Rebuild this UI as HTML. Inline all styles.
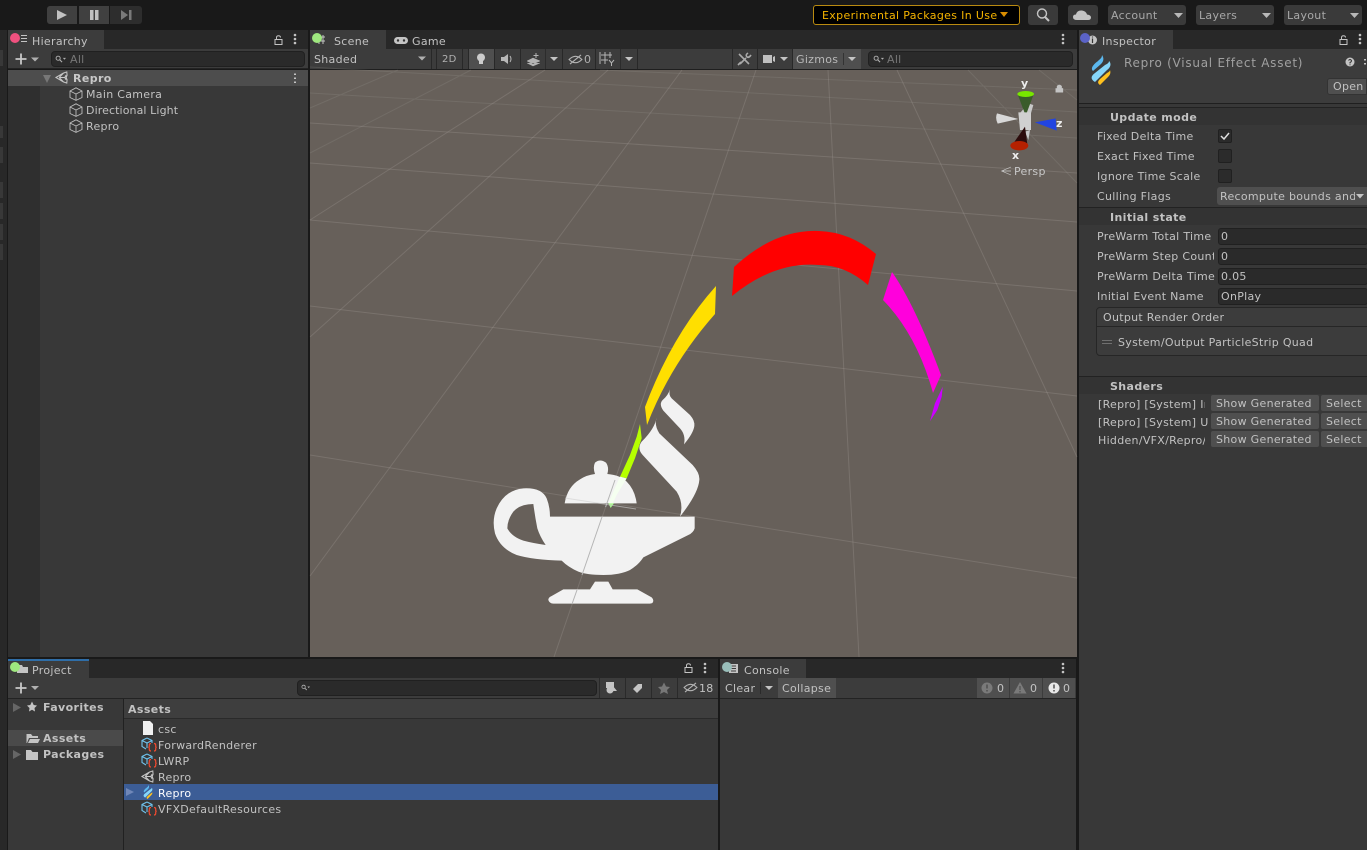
<!DOCTYPE html>
<html><head><meta charset="utf-8"><title>Unity</title>
<style>
html,body{margin:0;padding:0;background:#191919;width:1367px;height:850px;overflow:hidden}
div{position:absolute;box-sizing:border-box}
.t{font:11px/16px "DejaVu Sans","Liberation Sans",sans-serif;letter-spacing:.3px;color:#c2c2c2;white-space:nowrap;overflow:hidden;margin-top:1px}
.b{font-weight:bold;letter-spacing:.38px}
.w{background:#3c3c3c}
.f{background:#2a2a2a;border:1px solid #202020;border-radius:3px}
.k{background:#4f4f4f}
.u{background:#3a3a3a;border-radius:3px}
.c{background:#2b2b2b;border:1px solid #202020;border-radius:2px;width:14px;height:14px;left:1218px}
svg{position:absolute;left:0;top:0}
</style></head><body>

<!-- top toolbar -->
<div style="left:47px;top:6px;width:30px;height:18px;background:#404040;border-radius:3px 0 0 3px"></div>
<div style="left:79px;top:6px;width:30px;height:18px;background:#404040"></div>
<div style="left:110px;top:6px;width:32px;height:18px;background:#2d2d2d;border-radius:0 3px 3px 0"></div>
<div style="left:813px;top:5px;width:207px;height:20px;background:#000;border:1px solid #b98a10;border-radius:3px"></div>
<div class="u" style="left:1028px;top:5px;width:30px;height:20px"></div>
<div class="u" style="left:1068px;top:5px;width:30px;height:20px"></div>
<div class="u" style="left:1108px;top:5px;width:78px;height:20px"></div>
<div class="u" style="left:1196px;top:5px;width:78px;height:20px"></div>
<div class="u" style="left:1284px;top:5px;width:78px;height:20px"></div>

<!-- left slim panel -->
<div style="left:0;top:30px;width:7px;height:820px;background:#282828"></div>
<div style="left:0;top:50px;width:3px;height:16px;background:#383838"></div>
<div style="left:0;top:126px;width:3px;height:12px;background:#383838"></div>
<div style="left:0;top:147px;width:3px;height:16px;background:#383838"></div>
<div style="left:0;top:182px;width:3px;height:16px;background:#383838"></div>
<div style="left:0;top:203px;width:3px;height:16px;background:#383838"></div>
<div style="left:0;top:224px;width:3px;height:16px;background:#383838"></div>
<div style="left:0;top:244px;width:3px;height:16px;background:#383838"></div>

<!-- hierarchy -->
<div style="left:8px;top:30px;width:300px;height:19px;background:#282828"></div>
<div style="left:8px;top:30px;width:96px;height:19px;background:#3c3c3c"></div>
<div class="w" style="left:8px;top:49px;width:300px;height:20px;border-bottom:1px solid #232323"></div>
<div class="f" style="left:51px;top:51px;width:254px;height:16px;border-radius:4px"></div>
<div style="left:8px;top:70px;width:300px;height:587px;background:#383838"></div>
<div style="left:8px;top:86px;width:32px;height:571px;background:#2f2f2f"></div>
<div style="left:8px;top:70px;width:300px;height:16px;background:#4d4d4d"></div>

<!-- scene -->
<div style="left:310px;top:30px;width:767px;height:19px;background:#282828"></div>
<div style="left:310px;top:30px;width:76px;height:19px;background:#3c3c3c"></div>
<div class="w" style="left:310px;top:49px;width:767px;height:20px"></div>
<div style="left:310px;top:69px;width:767px;height:1px;background:#1f1f1f"></div>
<div style="left:310px;top:70px;width:767px;height:587px;background:#67605a"></div>
<div style="left:431px;top:49px;width:1px;height:20px;background:#282828"></div>
<div style="left:436px;top:49px;width:1px;height:20px;background:#282828"></div>
<div style="left:462px;top:49px;width:1px;height:20px;background:#282828"></div>
<div class="k" style="left:469px;top:49px;width:25px;height:20px"></div>
<div style="left:468px;top:49px;width:1px;height:20px;background:#282828"></div>
<div style="left:494px;top:49px;width:1px;height:20px;background:#282828"></div>
<div style="left:520px;top:49px;width:1px;height:20px;background:#282828"></div>
<div style="left:545px;top:49px;width:1px;height:20px;background:#2c2c2c"></div>
<div style="left:562px;top:49px;width:1px;height:20px;background:#282828"></div>
<div style="left:595px;top:49px;width:1px;height:20px;background:#282828"></div>
<div style="left:620px;top:49px;width:1px;height:20px;background:#2c2c2c"></div>
<div style="left:637px;top:49px;width:1px;height:20px;background:#282828"></div>
<div style="left:732px;top:49px;width:1px;height:20px;background:#282828"></div>
<div style="left:757px;top:49px;width:1px;height:20px;background:#282828"></div>
<div class="k" style="left:793px;top:49px;width:68px;height:20px"></div>
<div style="left:792px;top:49px;width:1px;height:20px;background:#282828"></div>
<div style="left:843px;top:53px;width:1px;height:12px;background:#333"></div>
<div class="f" style="left:868px;top:51px;width:205px;height:16px;border-radius:4px"></div>

<!-- inspector -->
<div style="left:1079px;top:30px;width:288px;height:820px;background:#383838"></div>
<div style="left:1079px;top:30px;width:288px;height:19px;background:#282828"></div>
<div style="left:1079px;top:30px;width:94px;height:19px;background:#3c3c3c"></div>
<div class="w" style="left:1079px;top:49px;width:288px;height:54px"></div>
<div style="left:1079px;top:103px;width:288px;height:1px;background:#1f1f1f"></div>
<div style="left:1079px;top:107px;width:288px;height:1px;background:#222"></div>
<div style="left:1079px;top:108px;width:288px;height:17px;background:#333"></div>
<div style="left:1327px;top:78px;width:40px;height:17px;background:#4f4f4f;border-radius:3px 0 0 3px;border:1px solid #333"></div>
<div class="c" style="top:129px"></div>
<div class="c" style="top:149px"></div>
<div class="c" style="top:169px"></div>
<div style="left:1217px;top:187px;width:150px;height:18px;background:#4f4f4f;border-radius:3px 0 0 3px"></div>
<div style="left:1079px;top:207px;width:288px;height:1px;background:#222"></div>
<div style="left:1079px;top:208px;width:288px;height:17px;background:#333"></div>
<div class="f" style="left:1218px;top:228px;width:150px;height:17px"></div>
<div class="f" style="left:1218px;top:248px;width:150px;height:17px"></div>
<div class="f" style="left:1218px;top:268px;width:150px;height:17px"></div>
<div class="f" style="left:1218px;top:288px;width:150px;height:17px"></div>
<div style="left:1096px;top:307px;width:275px;height:49px;background:#3c3c3c;border:1px solid #262626;border-radius:4px"></div>
<div style="left:1096px;top:326px;width:271px;height:1px;background:#262626"></div>
<div style="left:1079px;top:376px;width:288px;height:1px;background:#222"></div>
<div style="left:1079px;top:377px;width:288px;height:17px;background:#333"></div>
<div class="k" style="left:1211px;top:395px;width:108px;height:16px;border-radius:2px"></div>
<div class="k" style="left:1211px;top:413px;width:108px;height:16px;border-radius:2px"></div>
<div class="k" style="left:1211px;top:431px;width:108px;height:16px;border-radius:2px"></div>
<div class="k" style="left:1321px;top:395px;width:46px;height:16px;border-radius:2px 0 0 2px"></div>
<div class="k" style="left:1321px;top:413px;width:46px;height:16px;border-radius:2px 0 0 2px"></div>
<div class="k" style="left:1321px;top:431px;width:46px;height:16px;border-radius:2px 0 0 2px"></div>

<!-- project -->
<div style="left:8px;top:659px;width:710px;height:191px;background:#383838"></div>
<div style="left:8px;top:659px;width:710px;height:19px;background:#282828"></div>
<div style="left:8px;top:659px;width:81px;height:19px;background:#3c3c3c;border-top:2px solid #2f6ea8"></div>
<div class="w" style="left:8px;top:678px;width:710px;height:20px"></div>
<div style="left:8px;top:698px;width:710px;height:1px;background:#232323"></div>
<div class="f" style="left:297px;top:680px;width:300px;height:16px;border-radius:4px"></div>
<div style="left:599px;top:678px;width:1px;height:20px;background:#2a2a2a"></div>
<div style="left:625px;top:678px;width:1px;height:20px;background:#2a2a2a"></div>
<div style="left:651px;top:678px;width:1px;height:20px;background:#2a2a2a"></div>
<div style="left:677px;top:678px;width:1px;height:20px;background:#2a2a2a"></div>
<div style="left:8px;top:730px;width:115px;height:16px;background:#4a4a4a"></div>
<div style="left:123px;top:699px;width:1px;height:151px;background:#212121"></div>
<div style="left:124px;top:699px;width:594px;height:20px;background:#3e3e3e;border-bottom:1px solid #2a2a2a"></div>
<div style="left:124px;top:784px;width:594px;height:16px;background:#3c5d96"></div>

<!-- console -->
<div style="left:720px;top:659px;width:356px;height:191px;background:#383838"></div>
<div style="left:720px;top:659px;width:356px;height:19px;background:#282828"></div>
<div style="left:720px;top:659px;width:86px;height:19px;background:#3c3c3c"></div>
<div class="w" style="left:720px;top:678px;width:356px;height:20px"></div>
<div style="left:720px;top:698px;width:356px;height:1px;background:#232323"></div>
<div class="k" style="left:778px;top:678px;width:58px;height:20px"></div>
<div style="left:760px;top:682px;width:1px;height:12px;background:#2a2a2a"></div>
<div class="k" style="left:977px;top:678px;width:32px;height:20px"></div>
<div class="k" style="left:1010px;top:678px;width:32px;height:20px"></div>
<div class="k" style="left:1043px;top:678px;width:32px;height:20px"></div>

<svg width="1367" height="850" viewBox="0 0 1367 850" xmlns="http://www.w3.org/2000/svg">
<defs>
<symbol id="box" viewBox="0 0 14 14"><path d="M7 .8 13 4v6.500L7 13.400 1 10.500V4ZM1 4l6 3 6-3M7 7v6.400" fill="none" stroke="#bcbcbc" stroke-width=".9"/></symbol>
<symbol id="uni" viewBox="0 0 14 14"><path d="M1 7 9 2.300 12.700 1 13 4.600 12 7 13 9.400 12.700 13 9 11.700ZM4.500 7H10.500L12 4.500M10.500 7 12 9.500M4.500 7 9 2.500M4.500 7 9 11.500" fill="none" stroke="#c8c8c8" stroke-width="1.100"/></symbol>
<symbol id="code" viewBox="0 0 17 16"><path d="M6 1 11 3.500V6M6 1 1 3.500V9.500L5 12M1 3.500 6 6 11 3.500M6 6V11" fill="none" stroke="#6fc3ee" stroke-width="1.100"/><path d="M10 6.500Q8.300 6.500 8.300 8V9.200Q8.300 10.300 7.300 10.300Q8.300 10.300 8.300 11.400V12.500Q8.300 14 10 14M13 6.500Q14.700 6.500 14.700 8V9.200Q14.700 10.300 15.700 10.300Q14.700 10.300 14.700 11.400V12.500Q14.700 14 13 14" fill="none" stroke="#f04a30" stroke-width="1.200"/></symbol>
<symbol id="vfx" viewBox="0 0 22 30"><path d="M13 0C15 3 15 6 12 9L4 16C1 13 5 9 9 6 11 4 13 3 13 0Z" fill="#5cb8ee"/><path d="M20 6C23 9 21 13 18 15L6 27C1 24 2 21 6 18L16 10C18 9 20 8 20 6Z" fill="#86d6fa"/><path d="M21 15C22 18 21 20 19 22L11 30C8 28 9 26 11 24L18 18C20 17 21 16 21 15Z" fill="#ffc11e"/></symbol>
<symbol id="lock" viewBox="0 0 9 10"><path d="M1 4.500H8V9.500H1ZM2.500 4.500V2.500Q2.500 .7 4.500 .7 6.500 .7 6.500 2.500" fill="none" stroke="#c4c4c4" stroke-width="1"/></symbol>
<symbol id="dots" viewBox="0 0 4 12"><circle cx="2" cy="2" r="1.300" fill="#c4c4c4"/><circle cx="2" cy="6" r="1.300" fill="#c4c4c4"/><circle cx="2" cy="10" r="1.300" fill="#c4c4c4"/></symbol>
<symbol id="srch" viewBox="0 0 14 10"><circle cx="4" cy="4" r="2.600" fill="none" stroke="#b0b0b0" stroke-width="1.200"/><path d="M6 6 9 9" stroke="#b0b0b0" stroke-width="1.400"/><path d="M10 3.500H14L12 6Z" fill="#b0b0b0"/></symbol>
<symbol id="eye" viewBox="0 0 16 12"><path d="M1 6Q8 -1 15 6Q8 13 1 6ZM2 11 14 1" fill="none" stroke="#b4b4b4" stroke-width="1.200"/></symbol>
</defs>

<!-- scene grid -->
<g stroke="#a9a49f" stroke-width="1" fill="none">
<path stroke-opacity=".18" d="M310 67 1077 112M600 70 1077 90M310 93 1077 138M310 108 398 70M310 153 471 70M968 70 1077 183M1039 70 1077 100"/>
<path stroke-opacity=".27" d="M310 123 1077 173M310 163 1077 222M310 220 1077 291M310 306 1077 396M310 455 1077 578"/>
<path stroke-opacity=".27" d="M310 220 545 70M310 337 608 70M310 576 682 70M554 657 756 70M828 70 859 657M897 70 1077 457"/>
</g>

<!-- strip -->
<path fill="#ff0000" d="M734 267Q775 229 819 231Q850 232 876 254L868 285Q845 265 819 265Q775 261 732 296Z"/>
<path fill="#ffdf00" d="M716 286 715 314Q670 365 647 425L645 407Q672 335 716 286Z"/>
<path fill="#ff00dc" d="M892 272Q915 305 941 375L933 393Q917 335 883 300Z"/>
<path fill="#cc00ff" d="M942.700 386.700 941.700 396.700 937.300 410 930 421.300 935 403.300Z"/>
<path fill="#b6ff00" d="M640 424 641.700 438.300 635 458.300 626.700 478.300 620 476.700 630 455 636.700 436.700Z"/>

<!-- lamp -->
<g transform="translate(480 380) scale(.33333)" fill="#f2f2f2">
<path d="M254 370Q262 320 300 298Q320 285 345 282Q338 262 345 248Q360 235 378 248Q388 262 382 282Q420 285 440 305Q465 330 470 370Z"/>
<path fill-rule="evenodd" d="M210 410H644V445Q640 458 625 465L490 532Q475 555 450 570Q420 585 370 585Q320 585 295 575Q265 562 245 542Q160 540 110 525Q60 505 45 460Q35 420 50 385Q75 330 130 325Q185 322 200 355Q210 380 210 410ZM160 372Q120 372 100 395Q82 420 82 445Q95 470 130 482Q160 490 197 495Q180 470 172 445Q165 410 160 372Z"/>
<path d="M250 628H330L345 605H385L398 628H472L515 652Q523 660 518 668Q516 671 505 671H220Q208 670 205 660Q205 652 215 648Z"/>
<path d="M530 112Q522 135 538 160L638 255Q660 280 658 300Q655 340 600 410Q612 370 590 335L488 225Q470 205 485 185Q525 145 530 112Z"/>
<path d="M570 28Q565 45 575 55L630 105Q645 122 643 138Q640 160 612 193Q618 165 600 145L550 92Q536 72 548 60Q565 45 570 28Z"/>
<path fill="#f5fff0" d="M420 290 440 295 410 345 395 378 385 370 400 335Z"/>
<path fill="#a5f58a" d="M385 370H402L392 384Z"/>
</g>
<path d="M602 517 582 575M577 590 572 604M615 480 605.600 507" stroke="#b5b5b5" stroke-width="1" fill="none"/>
<path d="M565 498 636 509" stroke="#cfcfcf" stroke-width="1" fill="none" opacity=".6"/>

<!-- gizmo -->
<g transform="translate(985 75) scale(.33333)">
<path d="M100 120 130 85 145 90 135 125Z" fill="#c8c8c8"/>
<path d="M98 58H146L122 122Z" fill="#3a5c2a"/><ellipse cx="122" cy="57" rx="25" ry="9" fill="#78e600"/>
<path d="M36 115Q30 130 38 146L100 132Z" fill="#d8d8d8"/>
<path d="M120 170 135 165 130 195Z" fill="#c8c8c8"/>
<path d="M100 112H138V165H105Z" fill="#d0d0d0"/>
<path d="M150 142 212 130 215 167Z" fill="#2244e0"/>
<path d="M120 155 128 215 85 205Z" fill="#2c0c0c"/><ellipse cx="103" cy="212" rx="27" ry="14" fill="#b52100"/>
<path d="M212 40H234V52H212ZM216 40V33Q223 26 230 33V40" fill="#c4c4c4" stroke="#c4c4c4" stroke-width="1"/>
<path d="M78 276 50 288 78 300M50 288H78" fill="none" stroke="#cfcfcf" stroke-width="2"/>
</g>

<!-- transport -->
<path d="M57 10 67 15 57 20Z" fill="#c2c2c2"/><path d="M90 10H93.500V20H90ZM95 10H98.500V20H95Z" fill="#c2c2c2"/><path d="M121 10 128 15 121 20ZM129 10H131.500V20H129Z" fill="#7a7a7a"/>
<path d="M1000 12H1008L1004 17Z" fill="#d98c00"/>
<circle cx="1042" cy="13.500" r="4.500" fill="none" stroke="#c4c4c4" stroke-width="1.400"/><path d="M1045 17 1049 21" stroke="#c4c4c4" stroke-width="2"/>
<path d="M1077 20Q1073 20 1073 17Q1073 14.500 1076 14.500Q1077 10 1082 10.500Q1086 11 1087 14.500Q1091 15 1091 17.500Q1091 20 1088 20Z" fill="#c4c4c4"/>
<path d="M1174 13H1183L1178.500 18ZM1262 13H1271L1266.500 18ZM1350 13H1359L1354.500 18Z" fill="#b8b8b8"/>

<!-- tab icons -->
<path d="M21 35.500H27M21 38.500H27M21 41.500H27" stroke="#c4c4c4" stroke-width="1"/>
<path d="M319 35V44M323 35V44M316 37H325M316 41H325" stroke="#c4c4c4" stroke-width="1"/>
<rect x="394" y="37" width="14" height="7" rx="3.500" fill="#c4c4c4"/><circle cx="398" cy="40.500" r="1.200" fill="#333"/><circle cx="404" cy="40.500" r="1.200" fill="#333"/>
<circle cx="1092.500" cy="40" r="4.500" fill="#c4c4c4"/><path d="M1092.500 38.500V43M1092.500 36.500V37.500" stroke="#333" stroke-width="1.200"/>
<path d="M17 665H22L23 667H28V673H17Z" fill="#c4c4c4"/>
<path d="M729 664H738V673H729Z" fill="#c4c4c4"/><path d="M731 666H736M731 668.500H736M731 671H736" stroke="#3c3c3c" stroke-width="1"/>

<!-- lock and dots -->
<use href="#lock" x="274" y="35" width="9" height="10"/><use href="#dots" x="293" y="33" width="4" height="12"/>
<use href="#dots" x="1061" y="33" width="4" height="12"/>
<use href="#lock" x="1339" y="35" width="9" height="10"/><use href="#dots" x="1358" y="33" width="4" height="12"/>
<use href="#lock" x="684" y="663" width="9" height="10"/><use href="#dots" x="703" y="662" width="4" height="12"/>
<use href="#dots" x="1061" y="662" width="4" height="12"/>

<!-- plus -->
<path d="M21 53.500V64.500M15.500 59H26.500M21 682.500V693.500M15.500 688H26.500" stroke="#c8c8c8" stroke-width="1.800"/>
<path d="M31 57.500H39L35 61.500ZM31 686H39L35 690Z" fill="#b0b0b0"/>

<!-- search icons -->
<use href="#srch" x="55" y="55" width="11" height="8"/>
<use href="#srch" x="873" y="55" width="11" height="8"/>
<use href="#srch" x="301" y="684" width="9" height="7"/>

<!-- hierarchy icons -->
<path d="M43 75H51L47 83Z" fill="#777"/>
<use href="#uni" x="55" y="71" width="13" height="13"/>
<path d="M295 73.500V75M295 77.500V79M295 81.500V83" stroke="#c4c4c4" stroke-width="2"/>
<use href="#box" x="69" y="87" width="14" height="14"/><use href="#box" x="69" y="103" width="14" height="14"/><use href="#box" x="69" y="119" width="14" height="14"/>

<!-- scene toolbar icons -->
<path d="M418 56.500H426L422 60.500Z" fill="#b0b0b0"/>
<circle cx="481" cy="57.500" r="4" fill="#cccccc"/><rect x="479" y="61" width="4" height="3" fill="#cccccc"/>
<path d="M501 57H504L508 54V64L504 61H501Z" fill="#b8b8b8"/><path d="M510 56Q512 59 510 62" stroke="#b8b8b8" fill="none"/>
<path d="M527 61 533 58 540 61 533 64ZM527 63 533 66 540 63" fill="#b4b4b4" stroke="#b4b4b4" stroke-width=".5"/><path d="M536 53V58M533.500 55.500H538.500" stroke="#b4b4b4"/>
<path d="M550 57H558L554 61ZM625 57H633L629 61ZM848 57H856L852 61ZM780 57H788L784 61Z" fill="#c4c4c4"/>
<use href="#eye" x="568" y="54" width="15" height="11"/>
<path d="M600 52V64M605 52V64M610 52V58M601 55H612M601 60H608M609 60 611.500 63 614 60M611.500 63V66" fill="none" stroke="#b4b4b4" stroke-width="1"/>
<path d="M739 54 749 64M748 53Q745 55 747 57Q749 58 751 55M740 64 746 58M738 65 741 62" stroke="#aaaaaa" stroke-width="1.600" fill="none"/>
<path d="M763 55H772V63H763ZM773 57 775 56V62L773 61Z" fill="#c0c0c0"/>

<!-- inspector icons -->
<use href="#vfx" x="1089" y="55" width="22" height="30"/>
<circle cx="1350" cy="62" r="4.500" fill="#c4c4c4"/><path d="M1348.500 60.500Q1350 58.500 1351.500 60.500Q1351.500 62 1350 62.500V63.500M1350 64.300V65.300" stroke="#333" fill="none"/>
<path d="M1365 59v1.500M1365 63v1.500" stroke="#c4c4c4" stroke-width="2"/>
<path d="M1221 136 1224 139 1229 133" fill="none" stroke="#e0e0e0" stroke-width="1.500"/>
<path d="M1356 194H1364L1360 198.500Z" fill="#c4c4c4"/>
<path d="M1102 340.500H1112M1102 343.500H1112" stroke="#707070"/>

<!-- project icons -->
<path d="M13 703 21 707.500 13 712ZM13 750 21 754.500 13 759Z" fill="#666"/>
<path d="M32 701.500 33.700 705 37 705.500 34.500 708 35 711.500 32 709.800 29 711.500 29.500 708 27 705.500 30.300 705Z" fill="#c4c4c4"/>
<path d="M26.500 743V734H31L32.500 736H38V738H29L27 743ZM28 743 30 739H40L38 743Z" fill="#c4c4c4"/>
<path d="M26 750H31L32.500 752H38V760H26Z" fill="#c4c4c4"/>
<path d="M143 721H150L153 724V735H143Z" fill="#f0f0f0"/>
<use href="#code" x="141" y="737" width="17" height="16"/>
<use href="#code" x="141" y="753" width="17" height="16"/>
<use href="#uni" x="141" y="770" width="13" height="13"/>
<path d="M126 788 134 792 126 796Z" fill="#7087b8"/>
<use href="#vfx" x="142" y="785" width="11" height="14"/>
<use href="#code" x="141" y="801" width="17" height="16"/>
<path d="M606 682H614V688H606Z" fill="#c4c4c4"/><circle cx="610" cy="690" r="3.500" fill="#c4c4c4"/><path d="M613 686 617 691H611Z" fill="#c4c4c4"/>
<path d="M633 689 638 684H642V688L637 693Z" fill="#c4c4c4"/>
<path d="M664 682.500 666 686.500 670 687 667 690 668 694 664 692 660 694 661 690 658 687 662 686.500Z" fill="#777"/>
<use href="#eye" x="683" y="682" width="15" height="11"/>

<!-- console icons -->
<path d="M765 686H773L769 690Z" fill="#c4c4c4"/>
<circle cx="987" cy="688" r="5.500" fill="#7a7a7a"/><path d="M987 684.500V688.500M987 690V691.500" stroke="#4f4f4f" stroke-width="1.500"/>
<path d="M1020 682 1026.500 693.500H1013.500Z" fill="#7a7a7a"/><path d="M1020 686V690M1020 691V692.500" stroke="#4f4f4f" stroke-width="1.200"/>
<circle cx="1054" cy="688" r="5.500" fill="#e8e8e8"/><path d="M1054 684.500V688.500M1054 690V691.500" stroke="#4f4f4f" stroke-width="1.500"/>
</svg>

<!-- text -->
<div class="t" style="left:822px;top:7px;color:#f5b400;letter-spacing:.34px">Experimental Packages In Use</div>
<div class="t" style="left:1111px;top:7px;color:#a8a8a8">Account</div>
<div class="t" style="left:1199px;top:7px;color:#a8a8a8">Layers</div>
<div class="t" style="left:1287px;top:7px;color:#a8a8a8">Layout</div>

<div class="t" style="left:32px;top:33px">Hierarchy</div>
<div class="t" style="left:70px;top:51px;color:#777">All</div>
<div class="t b" style="left:73px;top:70px;color:#c8c8c8">Repro</div>
<div class="t" style="left:86px;top:86px">Main Camera</div>
<div class="t" style="left:86px;top:102px;letter-spacing:.1px">Directional Light</div>
<div class="t" style="left:86px;top:118px">Repro</div>

<div class="t" style="left:334px;top:33px">Scene</div>
<div class="t" style="left:412px;top:33px">Game</div>
<div class="t" style="left:314px;top:51px">Shaded</div>
<div class="t" style="left:442px;top:51px;color:#b0b0b0;font-size:10px">2D</div>
<div class="t" style="left:584px;top:51px;color:#b0b0b0">0</div>
<div class="t" style="left:796px;top:51px;color:#b8b8b8">Gizmos</div>
<div class="t" style="left:887px;top:51px;color:#777">All</div>
<div class="t b" style="left:1021px;top:75px;color:#eee">y</div>
<div class="t b" style="left:1056px;top:115px;color:#eee">z</div>
<div class="t b" style="left:1012px;top:147px;color:#eee">x</div>
<div class="t" style="left:1014px;top:163px;color:#c8c8c8">Persp</div>

<div class="t" style="left:1102px;top:33px">Inspector</div>
<div class="t" style="left:1124px;top:54px;font-size:12px;letter-spacing:.75px;color:#a0a0a0">Repro (Visual Effect Asset)</div>
<div class="t" style="left:1333px;top:78px">Open</div>
<div class="t b" style="left:1110px;top:109px">Update mode</div>
<div class="t" style="left:1097px;top:128px">Fixed Delta Time</div>
<div class="t" style="left:1097px;top:148px">Exact Fixed Time</div>
<div class="t" style="left:1097px;top:168px">Ignore Time Scale</div>
<div class="t" style="left:1097px;top:188px">Culling Flags</div>
<div class="t" style="left:1220px;top:188px;width:135px">Recompute bounds and</div>
<div class="t b" style="left:1110px;top:209px">Initial state</div>
<div class="t" style="left:1097px;top:228px;width:120px">PreWarm Total Time</div>
<div class="t" style="left:1097px;top:248px;width:117px">PreWarm Step Count</div>
<div class="t" style="left:1097px;top:268px;width:120px">PreWarm Delta Time</div>
<div class="t" style="left:1097px;top:288px;width:120px">Initial Event Name</div>
<div class="t" style="left:1221px;top:228px">0</div>
<div class="t" style="left:1221px;top:248px">0</div>
<div class="t" style="left:1221px;top:268px">0.05</div>
<div class="t" style="left:1221px;top:288px">OnPlay</div>
<div class="t" style="left:1103px;top:309px">Output Render Order</div>
<div class="t" style="left:1118px;top:334px">System/Output ParticleStrip Quad</div>
<div class="t b" style="left:1110px;top:378px">Shaders</div>
<div class="t" style="left:1098px;top:396px;width:107px">[Repro] [System] Initialize</div>
<div class="t" style="left:1098px;top:414px;width:110px">[Repro] [System] Update</div>
<div class="t" style="left:1098px;top:432px;width:107px">Hidden/VFX/Repro/System</div>
<div class="t" style="left:1216px;top:395px">Show Generated</div>
<div class="t" style="left:1216px;top:413px">Show Generated</div>
<div class="t" style="left:1216px;top:431px">Show Generated</div>
<div class="t" style="left:1326px;top:395px">Select</div>
<div class="t" style="left:1326px;top:413px">Select</div>
<div class="t" style="left:1326px;top:431px">Select</div>

<div class="t" style="left:32px;top:662px">Project</div>
<div class="t b" style="left:43px;top:699px">Favorites</div>
<div class="t b" style="left:43px;top:730px">Assets</div>
<div class="t b" style="left:43px;top:746px">Packages</div>
<div class="t b" style="left:128px;top:701px">Assets</div>
<div class="t" style="left:158px;top:721px">csc</div>
<div class="t" style="left:158px;top:737px">ForwardRenderer</div>
<div class="t" style="left:158px;top:753px">LWRP</div>
<div class="t" style="left:158px;top:769px">Repro</div>
<div class="t" style="left:158px;top:785px;color:#fff">Repro</div>
<div class="t" style="left:158px;top:801px">VFXDefaultResources</div>
<div class="t" style="left:699px;top:680px">18</div>

<div class="t" style="left:744px;top:662px">Console</div>
<div class="t" style="left:725px;top:680px">Clear</div>
<div class="t" style="left:782px;top:680px">Collapse</div>
<div class="t" style="left:997px;top:680px">0</div>
<div class="t" style="left:1030px;top:680px">0</div>
<div class="t" style="left:1063px;top:680px">0</div>

<!-- color dots -->
<div style="left:10px;top:33px;width:10px;height:10px;border-radius:50%;background:#f0517f"></div>
<div style="left:312px;top:33px;width:10px;height:10px;border-radius:50%;background:#9fe87f"></div>
<div style="left:1080px;top:33px;width:10px;height:10px;border-radius:50%;background:#5b63c7"></div>
<div style="left:10px;top:662px;width:10px;height:10px;border-radius:50%;background:#9fe87f"></div>
<div style="left:722px;top:662px;width:10px;height:10px;border-radius:50%;background:#9abfbb"></div>
</body></html>
